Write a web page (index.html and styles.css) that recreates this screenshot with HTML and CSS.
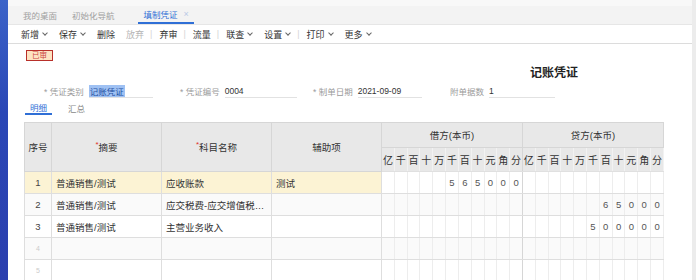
FILE: index.html
```html
<!DOCTYPE html>
<html lang="zh-CN">
<head>
  <meta charset="UTF-8" />
  <title>填制凭证</title>
  <link rel="stylesheet" href="styles.css">
</head>
<body>
  <div class="side"></div>

  <div class="main">
    <div class="tabs">
      <span class="tab">我的桌面</span>
      <span class="tab">初始化导航</span>
      <span class="tab active">填制凭证 <span class="close">×</span></span>
    </div>

    <div class="toolbar">
      <span class="tool dd">新增<i class="caret"></i></span>
      <span class="tool dd">保存<i class="caret"></i></span>
      <span class="tool">删除</span>
      <span class="tool off">放弃</span>
      <span class="sep">|</span>
      <span class="tool">弃审</span>
      <span class="sep">|</span>
      <span class="tool">流量</span>
      <span class="sep">|</span>
      <span class="tool dd">联查<i class="caret"></i></span>
      <span class="tool dd">设置<i class="caret"></i></span>
      <span class="sep">|</span>
      <span class="tool dd">打印<i class="caret"></i></span>
      <span class="tool dd">更多<i class="caret"></i></span>
    </div>

    <div class="stamp-row"><span class="stamp">已审</span></div>

    <div class="title">记账凭证</div>

    <div class="fields">
      <div class="field f1"><span class="label">* 凭证类别</span><span class="value"><span class="sel">记账凭证</span></span></div>
      <div class="field f2"><span class="label">* 凭证编号</span><span class="value">0004</span></div>
      <div class="field f3"><span class="label">* 制单日期</span><span class="value">2021-09-09</span></div>
      <div class="field f4"><span class="label">附单据数</span><span class="value">1</span></div>
    </div>

    <div class="subtabs">
      <span class="subtab active">明细</span>
      <span class="subtab">汇总</span>
    </div>

    <table class="voucher">
      <colgroup>
        <col class="c-no"><col class="c-text"><col class="c-text"><col class="c-text">
      </colgroup>
      <thead>
        <tr class="h1">
          <th rowspan="2">序号</th>
          <th rowspan="2"><b class="req">*</b>摘要</th>
          <th rowspan="2"><b class="req">*</b>科目名称</th>
          <th rowspan="2">辅助项</th>
          <th colspan="11">借方(本币)</th>
          <th colspan="11">贷方(本币)</th>
        </tr>
        <tr class="h2" id="units"></tr>
      </thead>
      <tbody id="rows"></tbody>
    </table>
  </div>

  <div class="edge"></div>

  <script>
    const units = ["亿","千","百","十","万","千","百","十","元","角","分"];
    const rows = [
      { no: "1", memo: "普通销售/测试", acct: "应收账款", aux: "测试", debit: "565000", credit: "" },
      { no: "2", memo: "普通销售/测试", acct: "应交税费-应交增值税…", aux: "", debit: "", credit: "65000" },
      { no: "3", memo: "普通销售/测试", acct: "主营业务收入", aux: "", debit: "", credit: "500000" },
      { no: "4", memo: "", acct: "", aux: "", debit: "", credit: "" },
      { no: "5", memo: "", acct: "", aux: "", debit: "", credit: "" }
    ];

    function digitCells(amount, last) {
      const padded = amount.padStart(11, " ");
      let html = "";
      for (let i = 0; i < 11; i++) {
        let cls = "d";
        if (i === 10 && !last) cls += " d-end";
        html += `<td class="${cls}">${padded[i].trim()}</td>`;
      }
      return html;
    }

    let head = "";
    for (let k = 0; k < 2; k++) {
      units.forEach((u, i) => {
        head += `<th class="u${i === 10 && k === 0 ? " d-end" : ""}">${u}</th>`;
      });
    }
    document.getElementById("units").innerHTML = head;

    document.getElementById("rows").innerHTML = rows.map((r, i) => `
      <tr class="${i === 0 ? "current" : ""} ${r.memo ? "" : "empty"}">
        <td class="no">${r.no}</td>
        <td>${r.memo}</td>
        <td>${r.acct}</td>
        <td>${r.aux}</td>
        ${digitCells(r.debit, false)}
        ${digitCells(r.credit, true)}
      </tr>
    `).join("");
  </script>
</body>
</html>
```

FILE: styles.css
```css
body {
  margin: 0;
  width: 696px;
  height: 280px;
  overflow: hidden;
  display: flex;
  font-family: "Liberation Sans", "Noto Sans CJK SC", sans-serif;
  color: #333;
  background: #fff;
}

.side {
  width: 8px;
  flex: none;
  background: linear-gradient(to bottom, #3b63c8 0%, #2a47b6 40%, #2b3fae 100%);
}

.edge {
  width: 4px;
  flex: none;
  background: #ececec;
}

.main {
  flex: 1;
  min-width: 0;
  padding-top: 6px;
  background: linear-gradient(to bottom, #f8f8f8 0, #f8f8f8 6px, #fff 6px);
}

/* top tabs */
.tabs {
  height: 18px;
  background: #f3f3f3;
  display: flex;
  align-items: stretch;
  padding-left: 15px;
  border-bottom: 1px solid #e6e6e6;
  font-size: 8.5px;
}

.tab {
  display: flex;
  align-items: center;
  color: #a0a0a0;
  margin-right: 15px;
}

.tab.active {
  color: #2f6fd6;
  margin-left: 8px;
  padding: 0 5px 0 6px;
  border-bottom: 2px solid #2f6fd6;
}

.tab .close {
  color: #b9c9e6;
  margin-left: 6px;
  font-size: 9px;
}

/* toolbar */
.toolbar {
  height: 18px;
  display: flex;
  align-items: center;
  padding-left: 13px;
  border-bottom: 1px solid #dcdcdc;
  font-size: 9px;
}

.tool {
  display: flex;
  align-items: center;
  margin-right: 11px;
}

.tool.dd {
  margin-right: 12px;
}

.tool.off {
  color: #b5b5b5;
}

.sep {
  color: #d5d5d5;
  margin: 0 7px 0 -5px;
}

.caret {
  display: inline-block;
  width: 3px;
  height: 3px;
  border-right: 1px solid #666;
  border-bottom: 1px solid #666;
  transform: rotate(45deg);
  margin: -2px 0 0 4px;
}

/* status stamp */
.stamp-row {
  display: flex;
  align-items: flex-start;
  height: 14px;
  padding: 6px 0 0 18px;
}

.stamp {
  font-size: 7.5px;
  line-height: 9px;
  padding: 0 5px;
  color: #c44;
  background: #fde3c2;
  border: 1px solid #b8302a;
}

.title {
  height: 15px;
  padding-top: 2px;
  padding-left: 522px;
  font-size: 12px;
  line-height: 15px;
  font-weight: bold;
  color: #222;
}

/* header fields */
.fields {
  position: relative;
  height: 15px;
  margin-top: 3px;
  font-size: 8.5px;
}

.field {
  position: absolute;
  top: 0;
  display: flex;
  align-items: center;
  height: 14px;
}

.f1 { left: 36px; }
.f2 { left: 172px; }
.f3 { left: 305px; }
.f4 { left: 442px; }

.label {
  color: #9a9a9a;
  margin-right: 5px;
}

.value {
  display: flex;
  align-items: center;
  height: 13px;
  border-bottom: 1px solid #e2e2e2;
  color: #333;
}

.f1 .value { width: 64px; }
.f2 .value { width: 72px; }
.f3 .value { width: 64px; }
.f4 .value { width: 66px; }

.sel {
  background: #9fc1f3;
  color: #1d4f9f;
  padding: 0 1px;
}

/* sub tabs */
.subtabs {
  display: flex;
  height: 15px;
  margin-top: 1px;
  padding-left: 17px;
  gap: 11px;
  font-size: 8.5px;
}

.subtab {
  display: flex;
  align-items: center;
  color: #888;
  padding: 0 5px;
}

.subtab.active {
  color: #2f6fd6;
  border-bottom: 2px solid #2f6fd6;
}

/* voucher table */
.voucher {
  margin: 7px 0 0 16px;
  width: 640px;
  border-collapse: collapse;
  table-layout: fixed;
  font-size: 9.5px;
}

.c-no { width: 27px; }
.c-text { width: 110px; }

.voucher th {
  background: #e8e8e8;
  font-weight: normal;
  color: #333;
  border: 1px solid #d6d6d6;
  padding: 0;
}

.voucher .h1 th { height: 24px; }
.voucher .h2 th { height: 23px; }

.voucher th.u {
  font-size: 10px;
  border-color: #e0e0e0 #f2f2f2;
}

.req {
  color: #e0302a;
  font-weight: normal;
  font-size: 8px;
  vertical-align: top;
}

.voucher td {
  height: 21px;
  border: 1px solid #dedede;
  padding: 0 0 0 4px;
  white-space: nowrap;
  overflow: hidden;
  color: #333;
}

.voucher td.no {
  text-align: center;
  padding: 0;
  color: #444;
}

.voucher tr.empty td.no {
  color: #ccc;
  font-size: 7px;
}

.voucher td.d {
  padding: 0;
  text-align: center;
  color: #555;
  border-left-color: #ededed;
  border-right-color: #ededed;
}

.voucher .d-end {
  border-right-color: #d6d6d6 !important;
}

.voucher tr.current td:not(.d) {
  background: #fcf3d4;
}

.voucher tbody tr:nth-child(even) td {
  background: #fafafa;
}
```
